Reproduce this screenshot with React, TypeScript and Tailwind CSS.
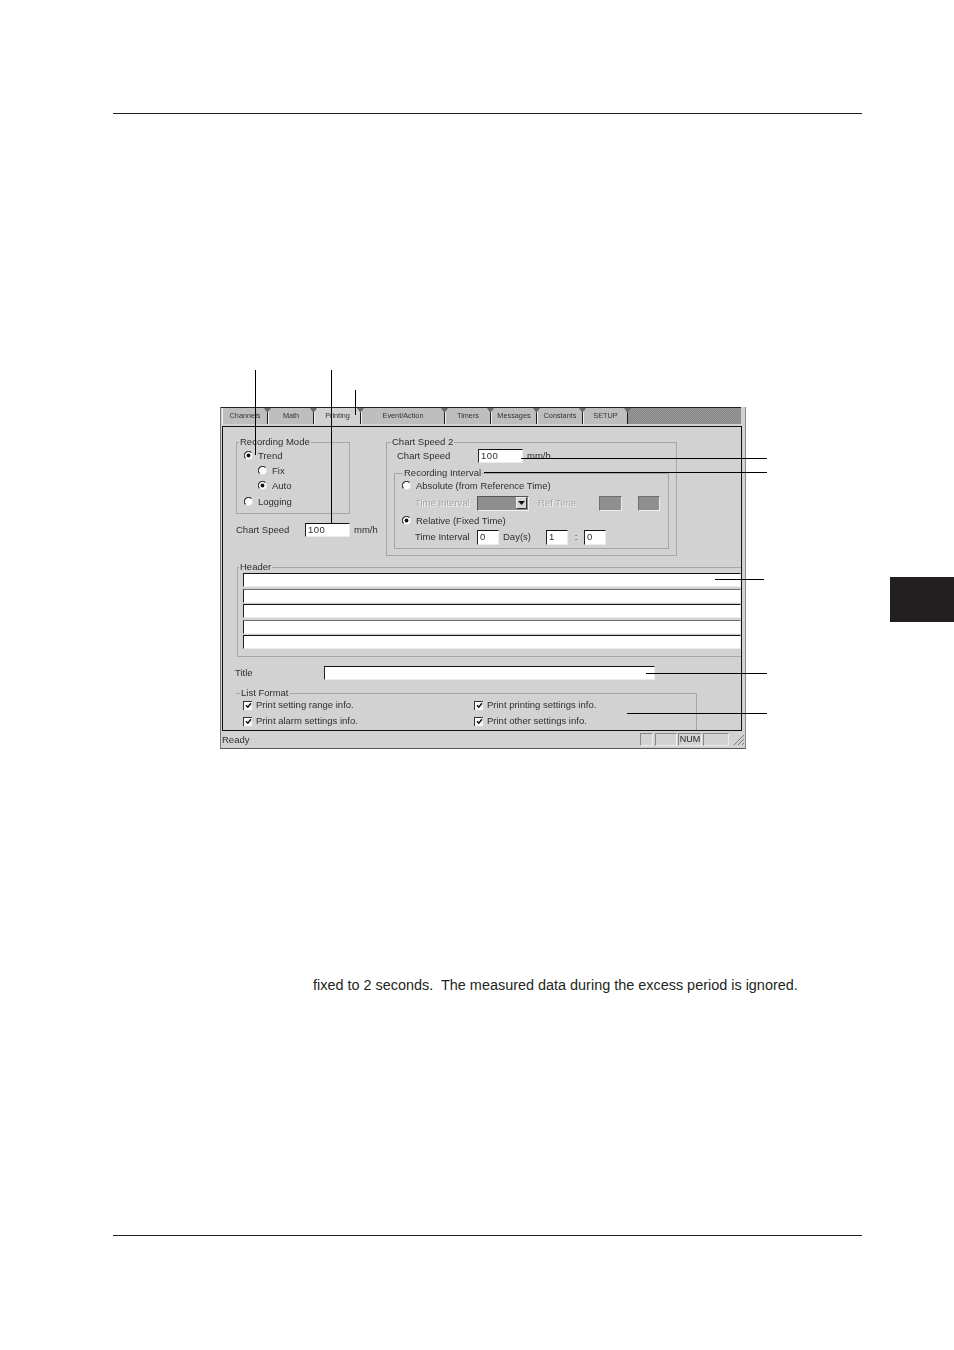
import React from "react";

const labelCls = "text-[9.5px] leading-none text-[#2e2e2e] whitespace-nowrap blur-[0.25px]";

function L({ children, className = "" }: { children: React.ReactNode; className?: string }) {
  return <span className={`${labelCls} ${className}`}>{children}</span>;
}

function Dim({ children, className = "" }: { children: React.ReactNode; className?: string }) {
  return (
    <span className={`text-[9.5px] leading-none text-[#a8a8a8] whitespace-nowrap blur-[0.25px] [text-shadow:1px_1px_0_#f4f4f4] ${className}`}>
      {children}
    </span>
  );
}

function Radio({ on = false }: { on?: boolean }) {
  return (
    <svg width="9" height="9" viewBox="0 0 9 9" className="shrink-0">
      <circle cx="4.5" cy="4.5" r="4" fill="#fafafa" />
      <path d="M1.6 7.4A4 4 0 0 1 7.4 1.6" fill="none" stroke="#222" strokeWidth="1.1" />
      {on && <circle cx="4.5" cy="4.5" r="1.9" fill="#111" />}
    </svg>
  );
}

function RadioRow({ on, label, pl, h = "h-[15px]", gap = "gap-[5px]" }: { on?: boolean; label: string; pl: string; h?: string; gap?: string }) {
  return (
    <div className={`flex items-center ${h} ${pl} ${gap}`}>
      <Radio on={on} />
      <L>{label}</L>
    </div>
  );
}

function Check({ label }: { label: string }) {
  return (
    <div className="flex items-center gap-[4px] h-[16px]">
      <span className="w-[9px] h-[9px] bg-[#f8f8f8] border-t border-l border-[#333] border-r-[#eee] border-b-[#eee] flex items-center justify-center">
        <svg width="7" height="7" viewBox="0 0 7 7">
          <path d="M1 3.2 L2.8 5.2 L6 1.2" fill="none" stroke="#111" strokeWidth="1.5" />
        </svg>
      </span>
      <L>{label}</L>
    </div>
  );
}

function Input({ w, h = "h-[14px]", value, top = "border-t-[#111]" }: { w: string; h?: string; value?: string; top?: string }) {
  return (
    <div className={`${w} ${h} shrink-0 bg-white border-t border-l border-r border-b border-l-[#222] border-r-[#ececec] border-b-[#ececec] ${top} flex items-center pl-[2px]`}>
      {value && <span className="text-[9.5px] leading-none tracking-[0.5px] text-[#2e2e2e] blur-[0.25px]">{value}</span>}
    </div>
  );
}

function GrayBox({ w, h = "h-[15px]" }: { w: string; h?: string }) {
  return <div className={`${w} ${h} shrink-0 bg-[#8f8f8f] border-t border-l border-r border-b border-t-[#6f6f6f] border-l-[#6f6f6f] border-r-[#ededed] border-b-[#ededed]`} />;
}

function Legend({ children, className }: { children: React.ReactNode; className: string }) {
  return (
    <span className={`absolute top-[-6px] bg-[#d2d2d2] px-[1px] leading-none flex ${className}`}>
      <L>{children}</L>
    </span>
  );
}

const groupBorder = "border border-[#a6a6a6]";

const tabs: { label: string; w: string; active?: boolean }[] = [
  { label: "Channels", w: "w-[46px]" },
  { label: "Math", w: "w-[46px]" },
  { label: "Printing", w: "w-[47px]", active: true },
  { label: "Event/Action", w: "w-[84px]" },
  { label: "Timers", w: "w-[46px]" },
  { label: "Messages", w: "w-[46px]" },
  { label: "Constants", w: "w-[46px]" },
  { label: "SETUP", w: "w-[45px]" },
];

function Tab({ label, w, active }: { label: string; w: string; active?: boolean }) {
  return (
    <div className={`relative ${w} h-[16px] flex items-center justify-center border-r border-r-[#1c1c1c] border-l border-l-[#efefef] ${active ? "bg-[#d2d2d2]" : "bg-[#bebebe]"}`}>
      <span className="text-[7.3px] leading-none text-[#333] whitespace-nowrap blur-[0.25px]">{label}</span>
      <svg width="7" height="5" viewBox="0 0 7 5" className="absolute top-0 right-[-4px] z-10">
        <path d="M0 0H7L3.5 5Z" fill="#6a6a6a" />
      </svg>
    </div>
  );
}

const pane = "h-full border border-t-[#888] border-l-[#888] border-r-[#eee] border-b-[#eee]";

function Dialog() {
  return (
    <div className="w-[526px] h-[342px] bg-[#d2d2d2] border-l border-l-[#777] border-r border-r-[#888] border-b border-b-[#555] flex flex-col overflow-hidden">
      {/* tab strip */}
      <div className="flex h-[19px] shrink-0 border-t border-t-[#222] pl-[1px] mr-[4px]">
        <div className="flex items-start">
          {tabs.map((t) => (
            <Tab key={t.label} {...t} />
          ))}
        </div>
        <div className="flex-1 h-[16px] bg-[repeating-conic-gradient(#868686_0_25%,#989898_0_50%)] bg-[length:2px_2px]" />
      </div>

      {/* client */}
      <div className="h-[305px] w-[520px] ml-[1px] shrink-0 border border-[#111] overflow-hidden">
        <div className="flex mt-[15px] h-[114px]">
          {/* left column */}
          <div className="ml-[13px] w-[114px] shrink-0">
            <div className={`relative h-[72px] ${groupBorder} pt-[5px]`}>
              <Legend className="left-[2px]">Recording Mode</Legend>
              <RadioRow on label="Trend" pl="pl-[7px]" />
              <RadioRow label="Fix" pl="pl-[21px]" />
              <RadioRow on label="Auto" pl="pl-[21px]" />
              <RadioRow label="Logging" pl="pl-[7px]" h="h-[15px] mt-[1px]" />
            </div>
            <div className="flex items-center mt-[9px] h-[14px]">
              <L className="w-[69px] shrink-0">Chart Speed</L>
              <Input w="w-[45px]" value="100" />
              <L className="ml-[4px]">mm/h</L>
            </div>
          </div>

          {/* right column */}
          <div className={`relative ml-[36px] w-[291px] h-[114px] shrink-0 ${groupBorder}`}>
            <Legend className="left-[4px]">Chart Speed 2</Legend>
            <div className="flex items-center h-[14px] mt-[6px] pl-[10px]">
              <L className="w-[81px] shrink-0">Chart Speed</L>
              <Input w="w-[45px]" value="100" />
              <L className="ml-[4px]">mm/h</L>
            </div>
            <div className={`relative ml-[7px] mt-[10px] w-[275px] h-[76px] ${groupBorder} pt-[4px]`}>
              <Legend className="left-[8px]">Recording Interval</Legend>
              <RadioRow label="Absolute (from Reference Time)" pl="pl-[7px]" />
              <div className="flex items-center h-[16px] mt-[2px] pl-[20px]">
                <Dim className="w-[62px] shrink-0">Time Interval</Dim>
                <div className="w-[52px] h-[15px] shrink-0 bg-[#8f8f8f] border-t border-l border-t-[#555] border-l-[#555] border-r border-b border-r-[#eee] border-b-[#eee] flex items-center justify-end pr-[1px]">
                  <span className="w-[11px] h-[12px] bg-[#d6d6d6] border border-[#333] border-t-[#eee] border-l-[#eee] flex items-center justify-center">
                    <svg width="7" height="4" viewBox="0 0 7 4"><path d="M0 0H7L3.5 4Z" fill="#111" /></svg>
                  </span>
                </div>
                <Dim className="ml-[9px] w-[61px] shrink-0">Ref Time</Dim>
                <GrayBox w="w-[23px]" />
                <Dim className="w-[16px] pl-[4px] shrink-0">:</Dim>
                <GrayBox w="w-[22px]" />
              </div>
              <RadioRow on label="Relative (Fixed Time)" pl="pl-[7px]" h="h-[15px] mt-[2px]" />
              <div className="flex items-center h-[16px] mt-[1px] pl-[20px]">
                <L className="w-[62px] shrink-0">Time Interval</L>
                <Input w="w-[22px]" h="h-[15px]" value="0" />
                <L className="ml-[4px] w-[43px] shrink-0">Day(s)</L>
                <Input w="w-[22px]" h="h-[15px]" value="1" />
                <L className="w-[16px] text-center shrink-0">:</L>
                <Input w="w-[22px]" h="h-[15px]" value="0" />
              </div>
            </div>
          </div>
        </div>

        {/* header */}
        <div className="relative ml-[14px] mt-[11px] h-[90px] border-t border-l border-b border-[#a6a6a6] pt-[5px] pl-[5px] flex flex-col gap-[1.5px]">
          <Legend className="left-[1px]">Header</Legend>
          <Input w="w-full" />
          <Input w="w-full" top="border-t-[#6e6e6e]" />
          <Input w="w-full" />
          <Input w="w-full" top="border-t-[#6e6e6e]" />
          <Input w="w-full" />
        </div>

        {/* title */}
        <div className="flex items-center mt-[9px] ml-[12px] h-[14px]">
          <L className="w-[89px] shrink-0">Title</L>
          <Input w="w-[331px]" />
        </div>

        {/* list format */}
        <div className="relative ml-[13px] mt-[13px] w-[461px] h-[40px] border-t border-r border-[#a6a6a6] pt-[3px] pl-[7px] grid grid-cols-[231px_1fr] content-start">
          <Legend className="left-[4px]">List Format</Legend>
          <Check label="Print setting range info." />
          <Check label="Print printing settings info." />
          <Check label="Print alarm settings info." />
          <Check label="Print other settings info." />
        </div>
      </div>

      {/* status bar */}
      <div className="flex items-center h-[17px] shrink-0 pl-[1px]">
        <L>Ready</L>
        <div className="ml-auto flex items-center h-[13px]">
          <div className={`w-[13px] ${pane}`} />
          <div className={`w-[22px] ml-[2px] ${pane}`} />
          <div className={`w-[24px] ml-[1px] ${pane} flex items-center justify-center`}>
            <span className="text-[9px] leading-none text-[#222] blur-[0.25px]">NUM</span>
          </div>
          <div className={`w-[26px] ml-[1px] ${pane}`} />
          <svg width="12" height="12" viewBox="0 0 12 12" className="ml-[4px]">
            <path d="M1 11L11 1M5 11L11 5M9 11L11 9" stroke="#777" strokeWidth="1" fill="none" />
          </svg>
        </div>
      </div>
    </div>
  );
}

export default function App() {
  return (
    <div className="relative w-[954px] h-[1350px] bg-white overflow-hidden flex flex-col font-['Liberation_Sans',Arial,sans-serif]">
      <div className="ml-[113px] mt-[113px] w-[749px] h-px bg-[#231f20] shrink-0" />

      {/* figure */}
      <div className="relative ml-[220px] mt-[256px] w-[547px] h-[379px] pt-[37px] shrink-0">
        <Dialog />
        {/* callout lines */}
        <div className="absolute left-[35px] top-0 w-px h-[85px] bg-black" />
        <div className="absolute left-[111px] top-0 w-px h-[153px] bg-black" />
        <div className="absolute left-[135px] top-[20px] w-px h-[25px] bg-black" />
        <div className="absolute left-[301px] top-[88px] w-[246px] h-px bg-black" />
        <div className="absolute left-[264px] top-[102px] w-[283px] h-px bg-black" />
        <div className="absolute left-[495px] top-[209px] w-[49px] h-px bg-black" />
        <div className="absolute left-[426px] top-[303px] w-[121px] h-px bg-black" />
        <div className="absolute left-[407px] top-[343px] w-[140px] h-px bg-black" />
      </div>

      <p className="ml-[313px] mt-[228px] text-[14.43px] leading-[16px] text-[#231f20] whitespace-pre shrink-0">
        {"fixed to 2 seconds.  The measured data during the excess period is ignored."}
      </p>

      <div className="ml-[113px] mt-[242px] w-[749px] h-px bg-[#231f20] shrink-0" />

      {/* chapter tab */}
      <div className="absolute right-0 top-[577px] w-[64px] h-[45px] bg-[#231f20]" />
    </div>
  );
}
